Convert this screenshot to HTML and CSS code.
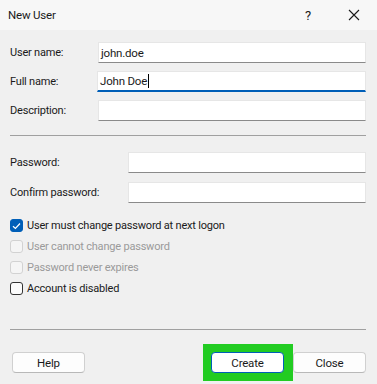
FILE: index.html
```html
<!DOCTYPE html>
<html>
  <head>
    <meta name="viewport" content="width=device-width,initial-scale=1.0">
    <title>New User</title>
    <link rel="stylesheet" href="styles.css">
  </head>
  <body>
    <div class="titlebar">
      <span class="title">New User</span>
      <span class="help-btn">?</span>
      <span class="close-btn">
        <svg width="12" height="12" viewBox="0 0 12 12"><path d="M1 1 L11 11 M11 1 L1 11" stroke="#1a1a1a" stroke-width="1.1" fill="none"/></svg>
      </span>
    </div>

    <div class="dialog">
      <div class="group names">
        <div class="row">
          <label>User name:</label>
          <div class="field">john.doe</div>
        </div>
        <div class="row">
          <label>Full name:</label>
          <div class="field focused">John Doe<span class="caret"></span></div>
        </div>
        <div class="row">
          <label>Description:</label>
          <div class="field"></div>
        </div>
      </div>

      <hr class="sep">

      <div class="group passwords">
        <div class="row">
          <label>Password:</label>
          <div class="field"></div>
        </div>
        <div class="row">
          <label>Confirm password:</label>
          <div class="field"></div>
        </div>
      </div>

      <div class="checks">
        <div class="check checked">
          <span class="box"><svg width="9" height="8" viewBox="0 0 9 8"><path d="M1 4.2 L3.4 6.5 L8 1.5" stroke="#fff" stroke-width="1.2" fill="none"/></svg></span>
          User must change password at next logon
        </div>
        <div class="check disabled"><span class="box"></span>User cannot change password</div>
        <div class="check disabled"><span class="box"></span>Password never expires</div>
        <div class="check"><span class="box"></span>Account is disabled</div>
      </div>

      <hr class="sep bottom">

      <div class="buttons">
        <button class="btn">Help</button>
        <div class="spacer"></div>
        <div class="highlight"><button class="btn default">Create</button></div>
        <button class="btn">Close</button>
      </div>
    </div>
  </body>
</html>
```

FILE: styles.css
```css
body {
  margin: 0;
  width: 377px;
  height: 384px;
  background: #f0f0f0;
  font-family: Roboto, "Liberation Sans", sans-serif;
  font-size: 11px;
  letter-spacing: -0.2px;
  color: #1a1a1a;
  overflow: hidden;
}
.titlebar {
  height: 30px;
  background: #f7f7f7;
  display: flex;
  align-items: center;
  padding-left: 8px;
}
.title {
  flex: 1;
  font-size: 11.5px;
}
.help-btn {
  width: 46px;
  text-align: center;
  font-size: 13px;
}
.close-btn {
  width: 46px;
  display: flex;
  justify-content: center;
}
.dialog {
  padding: 0 11px 0 10px;
}
.group {
  display: flex;
  flex-direction: column;
  gap: 8px;
}
.names {
  padding-top: 12px;
}
.passwords {
  padding-top: 16px;
  gap: 9px;
}
.row {
  display: flex;
  align-items: center;
}
.names label {
  width: 88px;
}
.passwords label {
  width: 118px;
}
.field {
  flex: 1;
  height: 21px;
  box-sizing: border-box;
  background: #fff;
  border: 1px solid #e6e6e6;
  border-bottom-color: #8a8a8a;
  padding: 0 2px;
  display: flex;
  align-items: center;
  font-size: 11.5px;
}
.field.focused {
  border-bottom: 2px solid #005fb8;
  margin-left: -1px;
}
.caret {
  display: inline-block;
  width: 1px;
  height: 14px;
  background: #000;
  margin-left: 1px;
}
.sep {
  border: none;
  border-top: 1px solid #a0a0a0;
  margin: 14px 0 0 0;
}
.checks {
  padding-top: 12px;
  display: flex;
  flex-direction: column;
}
.check {
  height: 21px;
  display: flex;
  align-items: center;
}
.box {
  width: 13px;
  height: 13px;
  box-sizing: border-box;
  border: 1px solid #333;
  border-radius: 3px;
  margin-right: 4px;
  display: flex;
  align-items: center;
  justify-content: center;
  background: #fbfbfb;
}
.check.checked .box {
  background: #005fb8;
  border-color: #005fb8;
}
.check.disabled {
  color: #9a9a9a;
}
.check.disabled .box {
  border-color: #d2d2d2;
  background: #f5f5f5;
}
.sep.bottom {
  margin-top: 30px;
}
.buttons {
  display: flex;
  align-items: center;
  margin-top: 14px;
  padding-left: 2px;
}
.spacer {
  flex: 1;
}
.btn {
  width: 73px;
  height: 21px;
  box-sizing: border-box;
  background: #fdfdfd;
  border: 1px solid #d0d0d0;
  border-bottom-color: #b8b8b8;
  border-radius: 4px;
  font-family: inherit;
  font-size: 11.5px;
  letter-spacing: inherit;
  color: #1a1a1a;
  padding: 0;
}
.btn.default {
  border: 1px solid #005fb8;
  background: #fff;
}
.highlight {
  background: #22cc22;
  padding: 8px 9px 8px 8px;
}
```
